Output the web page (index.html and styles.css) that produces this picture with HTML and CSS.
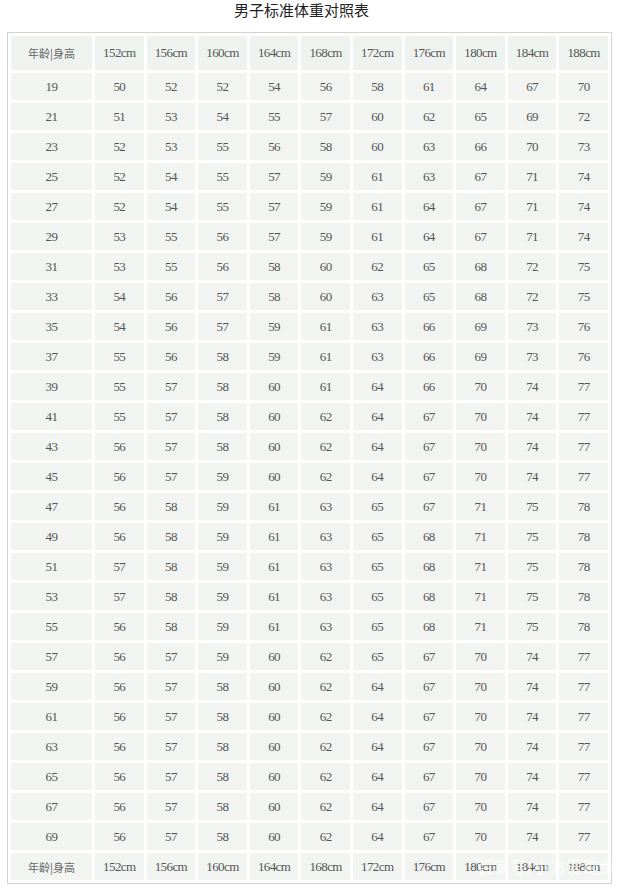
FILE: index.html
```html
<!DOCTYPE html>
<html lang="zh-CN">
<head>
<meta charset="utf-8">
<title>男子标准体重对照表</title>
<link rel="stylesheet" href="styles.css">
</head>
<body>
<h1 class="title">男子标准体重对照表</h1>
<div class="wrap">
<table class="chart">
<thead>
<tr class="head"><th class="lab">年龄|身高</th><th>152cm</th><th>156cm</th><th>160cm</th><th>164cm</th><th>168cm</th><th>172cm</th><th>176cm</th><th>180cm</th><th>184cm</th><th>188cm</th></tr>
</thead>
<tbody>
<tr><td>19</td><td>50</td><td>52</td><td>52</td><td>54</td><td>56</td><td>58</td><td>61</td><td>64</td><td>67</td><td>70</td></tr>
<tr><td>21</td><td>51</td><td>53</td><td>54</td><td>55</td><td>57</td><td>60</td><td>62</td><td>65</td><td>69</td><td>72</td></tr>
<tr><td>23</td><td>52</td><td>53</td><td>55</td><td>56</td><td>58</td><td>60</td><td>63</td><td>66</td><td>70</td><td>73</td></tr>
<tr><td>25</td><td>52</td><td>54</td><td>55</td><td>57</td><td>59</td><td>61</td><td>63</td><td>67</td><td>71</td><td>74</td></tr>
<tr><td>27</td><td>52</td><td>54</td><td>55</td><td>57</td><td>59</td><td>61</td><td>64</td><td>67</td><td>71</td><td>74</td></tr>
<tr><td>29</td><td>53</td><td>55</td><td>56</td><td>57</td><td>59</td><td>61</td><td>64</td><td>67</td><td>71</td><td>74</td></tr>
<tr><td>31</td><td>53</td><td>55</td><td>56</td><td>58</td><td>60</td><td>62</td><td>65</td><td>68</td><td>72</td><td>75</td></tr>
<tr><td>33</td><td>54</td><td>56</td><td>57</td><td>58</td><td>60</td><td>63</td><td>65</td><td>68</td><td>72</td><td>75</td></tr>
<tr><td>35</td><td>54</td><td>56</td><td>57</td><td>59</td><td>61</td><td>63</td><td>66</td><td>69</td><td>73</td><td>76</td></tr>
<tr><td>37</td><td>55</td><td>56</td><td>58</td><td>59</td><td>61</td><td>63</td><td>66</td><td>69</td><td>73</td><td>76</td></tr>
<tr><td>39</td><td>55</td><td>57</td><td>58</td><td>60</td><td>61</td><td>64</td><td>66</td><td>70</td><td>74</td><td>77</td></tr>
<tr><td>41</td><td>55</td><td>57</td><td>58</td><td>60</td><td>62</td><td>64</td><td>67</td><td>70</td><td>74</td><td>77</td></tr>
<tr><td>43</td><td>56</td><td>57</td><td>58</td><td>60</td><td>62</td><td>64</td><td>67</td><td>70</td><td>74</td><td>77</td></tr>
<tr><td>45</td><td>56</td><td>57</td><td>59</td><td>60</td><td>62</td><td>64</td><td>67</td><td>70</td><td>74</td><td>77</td></tr>
<tr><td>47</td><td>56</td><td>58</td><td>59</td><td>61</td><td>63</td><td>65</td><td>67</td><td>71</td><td>75</td><td>78</td></tr>
<tr><td>49</td><td>56</td><td>58</td><td>59</td><td>61</td><td>63</td><td>65</td><td>68</td><td>71</td><td>75</td><td>78</td></tr>
<tr><td>51</td><td>57</td><td>58</td><td>59</td><td>61</td><td>63</td><td>65</td><td>68</td><td>71</td><td>75</td><td>78</td></tr>
<tr><td>53</td><td>57</td><td>58</td><td>59</td><td>61</td><td>63</td><td>65</td><td>68</td><td>71</td><td>75</td><td>78</td></tr>
<tr><td>55</td><td>56</td><td>58</td><td>59</td><td>61</td><td>63</td><td>65</td><td>68</td><td>71</td><td>75</td><td>78</td></tr>
<tr><td>57</td><td>56</td><td>57</td><td>59</td><td>60</td><td>62</td><td>65</td><td>67</td><td>70</td><td>74</td><td>77</td></tr>
<tr><td>59</td><td>56</td><td>57</td><td>58</td><td>60</td><td>62</td><td>64</td><td>67</td><td>70</td><td>74</td><td>77</td></tr>
<tr><td>61</td><td>56</td><td>57</td><td>58</td><td>60</td><td>62</td><td>64</td><td>67</td><td>70</td><td>74</td><td>77</td></tr>
<tr><td>63</td><td>56</td><td>57</td><td>58</td><td>60</td><td>62</td><td>64</td><td>67</td><td>70</td><td>74</td><td>77</td></tr>
<tr><td>65</td><td>56</td><td>57</td><td>58</td><td>60</td><td>62</td><td>64</td><td>67</td><td>70</td><td>74</td><td>77</td></tr>
<tr><td>67</td><td>56</td><td>57</td><td>58</td><td>60</td><td>62</td><td>64</td><td>67</td><td>70</td><td>74</td><td>77</td></tr>
<tr><td>69</td><td>56</td><td>57</td><td>58</td><td>60</td><td>62</td><td>64</td><td>67</td><td>70</td><td>74</td><td>77</td></tr>
</tbody>
<tfoot>
<tr class="foot"><td class="lab">年龄|身高</td><td>152cm</td><td>156cm</td><td>160cm</td><td>164cm</td><td>168cm</td><td>172cm</td><td>176cm</td><td>180cm</td><td>184cm</td><td>188cm</td></tr>
</tfoot>
</table>
<div class="watermark">百家号/小方爱跑步</div>
</div>
</body>
</html>
```

FILE: styles.css
```css
html, body {
  margin: 0;
  padding: 0;
  background: #ffffff;
}

.title {
  width: 603px;
  height: 32px;
  margin: 0;
  font-family: "Noto Sans CJK SC", "Noto Sans", sans-serif;
  font-size: 15px;
  font-weight: 400;
  line-height: 20px;
  color: #222222;
  text-align: center;
}

.wrap {
  position: relative;
  padding-left: 7px;
  width: 605px;
}

.chart {
  width: 605px;
  table-layout: fixed;
  border: 1px solid #d2d2d2;
  border-collapse: separate;
  border-spacing: 3px;
  font-family: "Liberation Serif", "Times New Roman", serif;
  font-size: 13px;
  letter-spacing: -0.6px;
  color: #555555;
}

.chart th,
.chart td {
  padding: 0;
  height: 27px;
  background: #f1f4f1;
  text-align: center;
  vertical-align: middle;
  font-weight: 400;
}

.chart th.lab,
.chart td.lab {
  width: 81px;
}

.chart tbody tr:first-child td {
  width: auto;
}

.chart .head th {
  height: 34px;
  background: #eff3ef;
}

.chart .lab {
  font-family: "Noto Sans CJK SC", "Noto Sans", sans-serif;
  font-size: 11px;
  letter-spacing: 0;
  color: #666666;
}

.watermark {
  position: absolute;
  left: 477px;
  top: 823px;
  font-family: "Noto Sans CJK SC", "Noto Sans", sans-serif;
  font-size: 16px;
  line-height: 22px;
  color: rgba(255, 255, 255, 0.75);
  white-space: nowrap;
  letter-spacing: 0.5px;
}
```
